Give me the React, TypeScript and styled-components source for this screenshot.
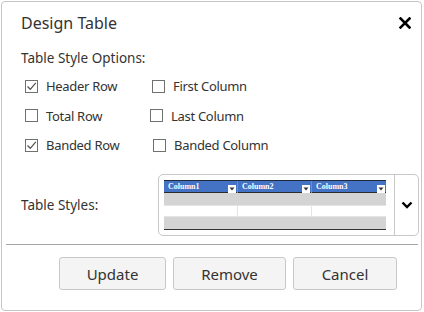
import React from "react";
import styled, { createGlobalStyle } from "styled-components";

const Global = createGlobalStyle`
  html, body { margin: 0; padding: 0; background: #ffffff; }
  body { font-family: "Noto Sans", "Open Sans", sans-serif; color: #333333; }
  * { box-sizing: border-box; }
`;

const Dialog = styled.div`
  margin: 1px 0 0 1px;
  width: 421px;
  height: 310px;
  border: 1px solid #c6c6c6;
  border-radius: 4px;
  background: #ffffff;
  display: flex;
  flex-direction: column;
`;

const Header = styled.div`
  display: flex;
  align-items: center;
  justify-content: space-between;
  height: 20px;
  margin-top: 11px;
  padding: 0 9px 0 19px;
`;

const Title = styled.div`
  font-size: 16px;
  line-height: 20px;
  color: #333333;
`;

const CloseButton = styled.button`
  width: 14px;
  height: 14px;
  padding: 0;
  border: none;
  background: transparent;
  display: flex;
  align-items: center;
  justify-content: center;
`;

const Body = styled.div`
  padding: 0 2px 0 19px;
  display: flex;
  flex-direction: column;
`;

const SectionLabel = styled.div`
  margin-top: 15px;
  font-size: 13.5px;
  line-height: 20px;
  color: #333333;
`;

const OptionGrid = styled.div`
  margin-top: 8px;
  display: flex;
  flex-direction: column;
  gap: 9.5px;
  padding-left: 4px;
`;

const OptionRow = styled.div`
  display: flex;
  align-items: center;
  height: 20px;
`;

const Option = styled.label<{ $shift?: number; $first?: boolean }>`
  display: flex;
  align-items: center;
  gap: 8px;
  width: ${(p) => (p.$first ? "125px" : "auto")};
  margin-left: ${(p) => p.$shift ?? 0}px;
  font-size: 13px;
  letter-spacing: -0.3px;
  line-height: 20px;
  color: #333333;
`;

const Box = styled.span`
  width: 13px;
  height: 13px;
  border: 1px solid #707070;
  background: #ffffff;
  display: flex;
  align-items: center;
  justify-content: center;
  flex: none;
`;

const StylesRow = styled.div`
  margin-top: 19px;
  display: flex;
  align-items: center;
`;

const StylesLabel = styled.div`
  width: 137px;
  font-size: 13.5px;
  line-height: 20px;
  color: #333333;
`;

const Picker = styled.div`
  width: 261px;
  height: 62px;
  border: 1px solid #c8c8c8;
  border-radius: 5px;
  display: flex;
  align-items: stretch;
`;

const PreviewWrap = styled.div`
  padding: 5px 8px 5px 5px;
  display: flex;
  align-items: flex-start;
`;

const Preview = styled.div`
  width: 222px;
  border-top: 1px solid #1f2a3a;
  border-bottom: 1px solid #333333;
  display: flex;
  flex-direction: column;
`;

const PreviewHeader = styled.div`
  display: grid;
  grid-template-columns: 73px 74px 75px;
  height: 12px;
  background: #4472c4;
  border-bottom: 1px solid #2b2b2b;
`;

const HeadCell = styled.div<{ $edge?: boolean }>`
  display: flex;
  align-items: center;
  justify-content: space-between;
  padding: 0 1px 0 4px;
  border-left: ${(p) => (p.$edge ? "none" : "1px solid #6b8fd6")};
  font-family: "Liberation Serif", serif;
  font-weight: bold;
  font-size: 8px;
  line-height: 12px;
  color: #ffffff;
`;

const DropBox = styled.span`
  width: 8px;
  height: 8px;
  margin-top: 3px;
  background: #ffffff;
  display: flex;
  align-items: center;
  justify-content: center;
`;

const PreviewRow = styled.div<{ $band?: boolean }>`
  display: grid;
  grid-template-columns: 73px 74px 75px;
  height: 12px;
  background: ${(p) => (p.$band ? "#d4d4d4" : "#ffffff")};
  border-top: ${(p) => (p.$band ? "none" : "1px solid #e4e4e4")};
  border-bottom: ${(p) => (p.$band ? "none" : "1px solid #e4e4e4")};
`;

const PreviewCell = styled.div<{ $edge?: boolean; $band?: boolean }>`
  border-left: ${(p) => (p.$edge || p.$band ? "none" : "1px solid #e4e4e4")};
`;

const DropToggle = styled.div`
  flex: 1;
  border-left: 1px solid #c8c8c8;
  display: flex;
  align-items: center;
  justify-content: center;
  padding-left: 1px;
`;

const Separator = styled.div`
  margin: 8px 3px 0 4px;
  height: 1px;
  background: #a6a6a6;
`;

const Footer = styled.div`
  margin-top: 12px;
  padding-left: 57px;
  display: flex;
  gap: 7px;
`;

const Button = styled.button<{ $w: number }>`
  width: ${(p) => p.$w}px;
  height: 33px;
  background: #f4f4f4;
  border: 1px solid #c8c8c8;
  border-radius: 3px;
  font-family: "Noto Sans", "Open Sans", sans-serif;
  font-size: 15px;
  color: #333333;
  padding: 0;
`;

const Check = () => (
  <svg width="11" height="11" viewBox="0 0 11 11">
    <path d="M1.5 5.5 L4.3 8.3 L9.8 1.8" fill="none" stroke="#555555" strokeWidth="1.3" />
  </svg>
);

const CheckBox = ({ checked }: { checked?: boolean }) => <Box>{checked ? <Check /> : null}</Box>;

const Tri = () => (
  <svg width="6" height="4" viewBox="0 0 6 4">
    <path d="M0.5 0.5 L5.5 0.5 L3 3.5 Z" fill="#333" />
  </svg>
);

export default function App() {
  const cols = ["Column1", "Column2", "Column3"];
  return (
    <>
      <Global />
      <Dialog>
        <Header>
          <Title>Design Table</Title>
          <CloseButton aria-label="close">
            <svg width="12" height="12" viewBox="0 0 12 12">
              <path d="M1.5 1.5 L10.5 10.5 M10.5 1.5 L1.5 10.5" stroke="#000" strokeWidth="2.6" strokeLinecap="square" />
            </svg>
          </CloseButton>
        </Header>
        <Body>
          <SectionLabel>Table Style Options:</SectionLabel>
          <OptionGrid>
            <OptionRow>
              <Option $first>
                <CheckBox checked />
                Header Row
              </Option>
              <Option $shift={2}>
                <CheckBox />
                First Column
              </Option>
            </OptionRow>
            <OptionRow>
              <Option $first>
                <CheckBox />
                Total Row
              </Option>
              <Option $shift={0}>
                <CheckBox />
                Last Column
              </Option>
            </OptionRow>
            <OptionRow>
              <Option $first>
                <CheckBox checked />
                Banded Row
              </Option>
              <Option $shift={3}>
                <CheckBox />
                Banded Column
              </Option>
            </OptionRow>
          </OptionGrid>
          <StylesRow>
            <StylesLabel>Table Styles:</StylesLabel>
            <Picker>
              <PreviewWrap>
                <Preview>
                  <PreviewHeader>
                    {cols.map((c, i) => (
                      <HeadCell key={c} $edge={i === 0}>
                        {c}
                        <DropBox>
                          <Tri />
                        </DropBox>
                      </HeadCell>
                    ))}
                  </PreviewHeader>
                  {[true, false, true].map((band, r) => (
                    <PreviewRow key={r} $band={band}>
                      {cols.map((c, i) => (
                        <PreviewCell key={c} $edge={i === 0} $band={band} />
                      ))}
                    </PreviewRow>
                  ))}
                </Preview>
              </PreviewWrap>
              <DropToggle>
                <svg width="12" height="8" viewBox="0 0 12 8">
                  <path d="M1.5 1.5 L6 6 L10.5 1.5" fill="none" stroke="#000" strokeWidth="2.4" />
                </svg>
              </DropToggle>
            </Picker>
          </StylesRow>
        </Body>
        <Separator />
        <Footer>
          <Button $w={107}>Update</Button>
          <Button $w={113}>Remove</Button>
          <Button $w={104}>Cancel</Button>
        </Footer>
      </Dialog>
    </>
  );
}
